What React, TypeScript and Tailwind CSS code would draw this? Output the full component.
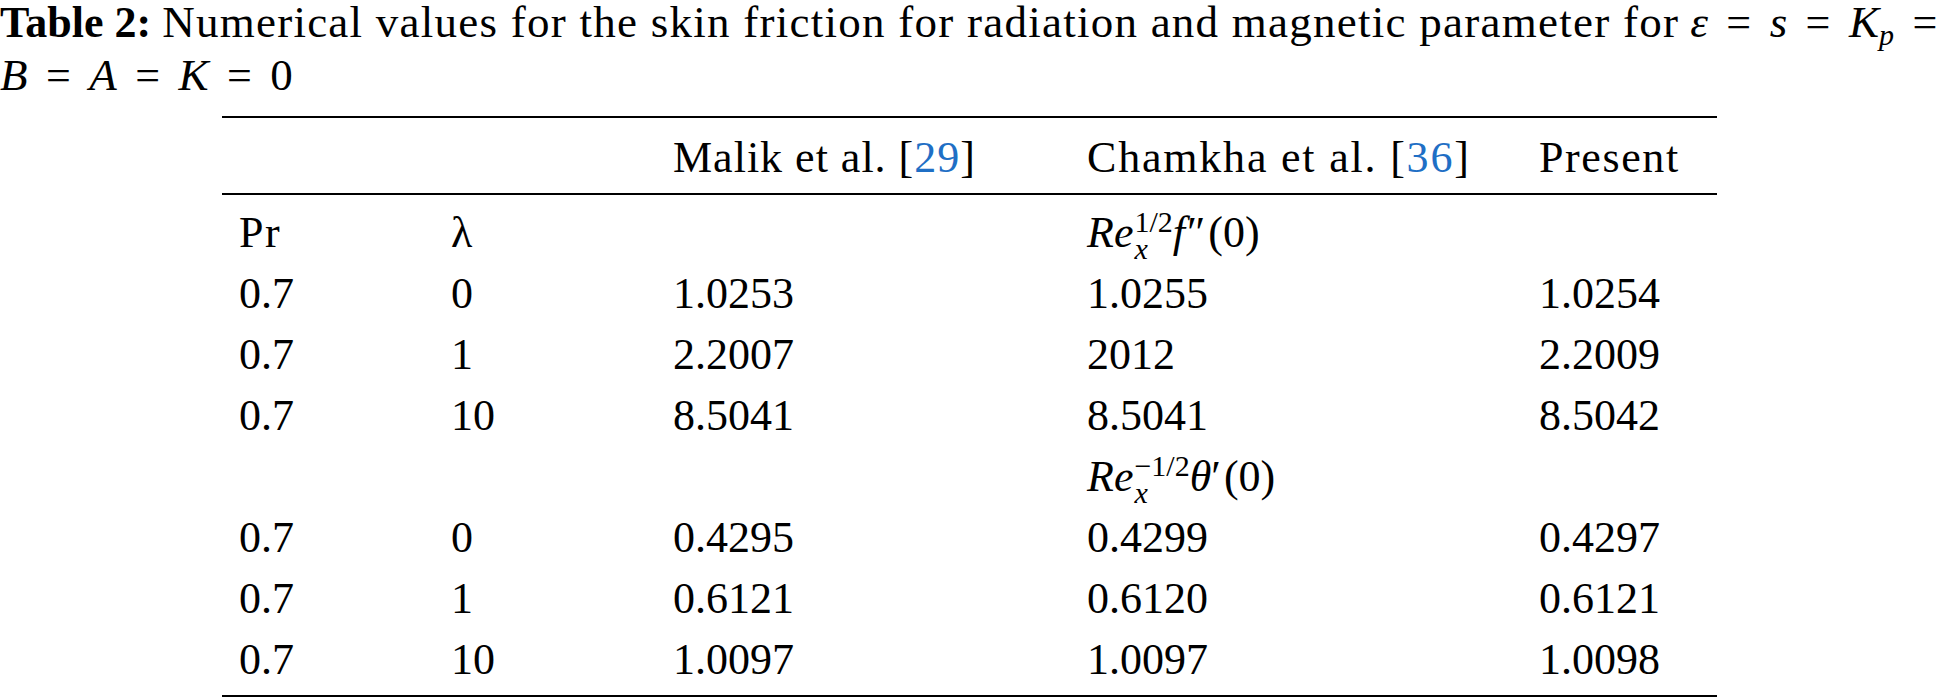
import type { ReactNode } from "react";

const cols = "grid grid-cols-[212px_222px_414px_452px_1fr] grid-rows-[61px] pl-[17px] items-center";

const rows1 = [
  ["0.7", "0", "1.0253", "1.0255", "1.0254"],
  ["0.7", "1", "2.2007", "2012", "2.2009"],
  ["0.7", "10", "8.5041", "8.5041", "8.5042"],
];

const rows2 = [
  ["0.7", "0", "0.4295", "0.4299", "0.4297"],
  ["0.7", "1", "0.6121", "0.6120", "0.6121"],
  ["0.7", "10", "1.0097", "1.0097", "1.0098"],
];

function Eq() {
  return <span className="mx-[0.42em] not-italic tracking-normal">=</span>;
}

function Cite({ n }: { n: string }) {
  return (
    <>
      [<span className="text-[#1f6fc5]">{n}</span>]
    </>
  );
}

// Re_x^{sup} followed by the function part and (0)
function ReExpr({ sup, fn }: { sup: string; fn: ReactNode }) {
  return (
    <span className="whitespace-nowrap">
      <span className="italic">Re</span>
      <span className="inline-flex flex-col align-[15px] text-[30px] leading-[27px] ml-[1px]">
        <span>{sup}</span>
        <span className="italic">x</span>
      </span>
      {fn}
      <span className="ml-[3px]">(0)</span>
    </span>
  );
}

function Row({ cells }: { cells: ReactNode[] }) {
  return (
    <div className={`${cols} h-[61px]`}>
      {cells.map((c, i) => (
        <div key={i}>{c}</div>
      ))}
    </div>
  );
}

export default function App() {
  return (
    <div className="w-[1954px] h-[700px] overflow-hidden bg-white text-black font-['Liberation_Serif','Times_New_Roman',serif] text-[44px] leading-[56px]">
      {/* caption */}
      <div className="whitespace-nowrap">
        <div className="h-[47px] leading-[44px]">
          <span className="font-bold">Table 2:</span>{" "}
          <span className="text-[45px] tracking-[1.25px]">
            Numerical values for the skin friction for radiation and magnetic parameter for
          </span>{" "}
          <span className="italic text-[45px]">ε</span>
          <Eq />
          <span className="italic text-[45px]">s</span>
          <Eq />
          <span className="italic text-[45px]">K</span>
          <span className="italic text-[30px] leading-none align-[-8px]">p</span>
          <Eq />
        </div>
        <div className="h-[56px]">
          <span className="italic text-[45px]">B</span>
          <Eq />
          <span className="italic text-[45px]">A</span>
          <Eq />
          <span className="italic text-[45px]">K</span>
          <Eq />
          <span className="text-[45px]">0</span>
        </div>
      </div>

      <div className="ml-[222px] w-[1495px] mt-[13px] leading-[61px]">
        <div className="border-t-2 border-black" />
        <div className={`${cols} h-[75px] grid-rows-[72px] pt-[3px]`}>
          <div />
          <div />
          <div className="tracking-[1px]">
            Malik et al. <Cite n="29" />
          </div>
          <div className="tracking-[1.8px]">
            Chamkha et al. <Cite n="36" />
          </div>
          <div className="tracking-[1.6px]">Present</div>
        </div>
        <div className="border-t-2 border-black" />
        <div className="pt-[7px] pb-[5px]">
          <Row
            cells={[
              <span className="tracking-[1.5px]">Pr</span>,
              "λ",
              "",
              <ReExpr
                sup="1/2"
                fn={
                  <span className="italic">
                    f<span className="not-italic leading-none ml-[2px]">″</span>
                  </span>
                }
              />,
              "",
            ]}
          />
          {rows1.map((r, i) => (
            <Row key={i} cells={r} />
          ))}
          <Row
            cells={[
              "",
              "",
              "",
              <ReExpr
                sup="−1/2"
                fn={
                  <span className="italic">
                    θ<span className="not-italic leading-none">′</span>
                  </span>
                }
              />,
              "",
            ]}
          />
          {rows2.map((r, i) => (
            <Row key={i} cells={r} />
          ))}
        </div>
        <div className="border-t-2 border-black" />
      </div>
    </div>
  );
}
